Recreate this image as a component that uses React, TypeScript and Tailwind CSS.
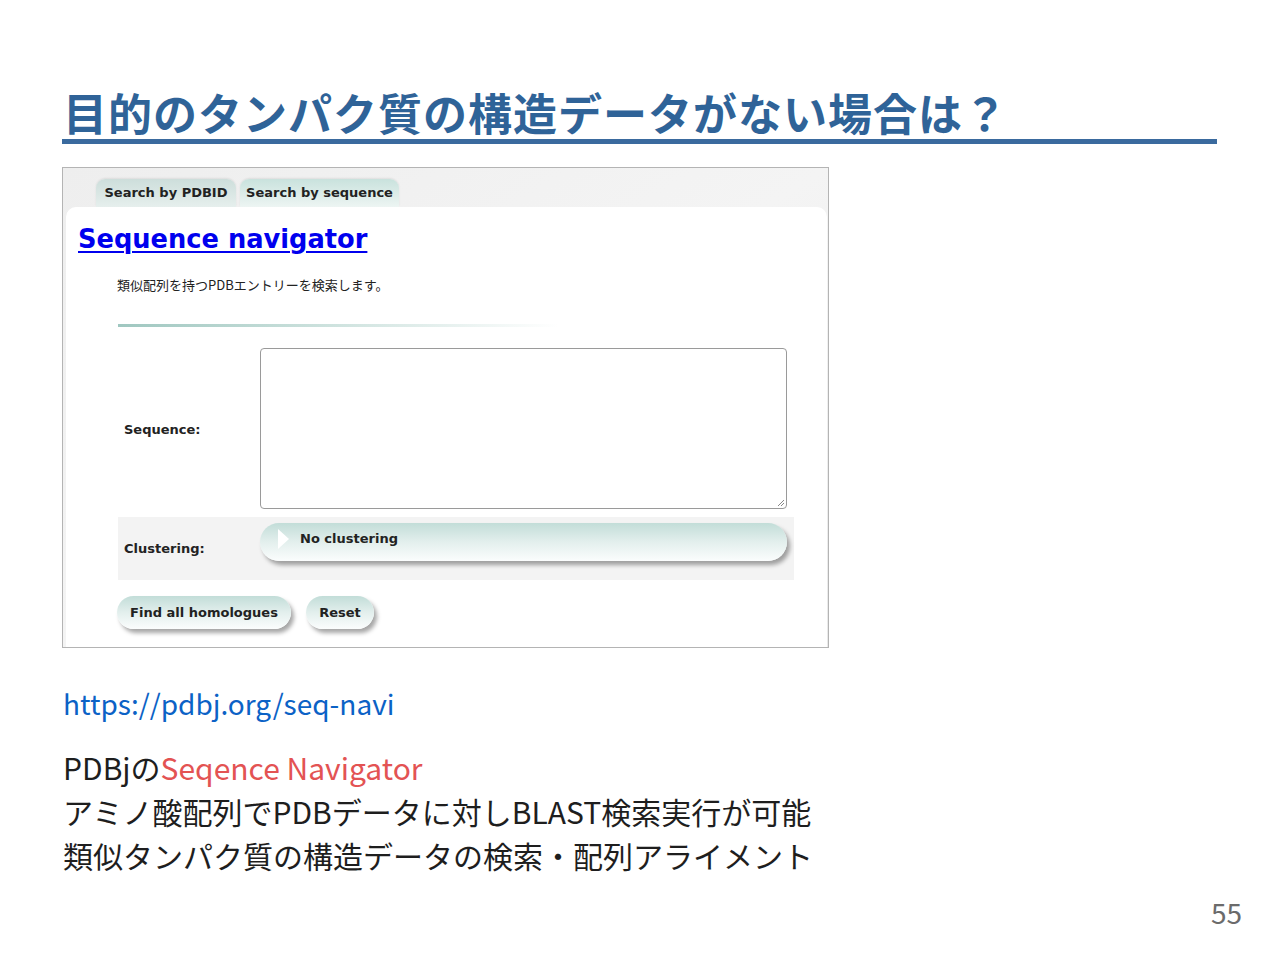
import React from "react";

const jp = { fontFamily: '"Noto Sans CJK JP", "Noto Sans", sans-serif' };
const vd = { fontFamily: '"DejaVu Sans", Verdana, sans-serif' };

function Pill({ children, className }: { children: React.ReactNode; className?: string }) {
  return (
    <div
      className={
        "flex items-center rounded-full bg-gradient-to-b from-[#c2ddd8] via-[#e3efed] to-[#fbfdfd] shadow-[3px_4px_4px_rgba(0,0,0,0.35)] " +
        (className || "")
      }
    >
      {children}
    </div>
  );
}

export default function App() {
  return (
    <div className="w-[1280px] h-[960px] bg-white relative overflow-hidden" style={jp}>
      <div className="pl-[62px] pt-[88px]">
        <h1 className="text-[44px] leading-[48px] font-bold text-[#2f6398] tracking-[1px] pl-[1px]">
          目的のタンパク質の構造データがない場合は？
        </h1>
        <div className="mt-[3px] h-[5px] w-[1155px] bg-[#3a6a9e]" />

        {/* screenshot */}
        <div className="mt-[23px] w-[767px] h-[481px] border border-[#b4b4b4] bg-gradient-to-br from-[#eeeeee] via-[#f4f4f4] to-[#e9e9e9] pt-[11px] flex flex-col" style={vd}>
          <div className="flex items-end pl-[33px] gap-[4px] h-[28px]">
            <div className="h-[28px] w-[140px] rounded-t-[9px] bg-gradient-to-b from-[#cddedb] to-[#e6efed] flex items-center justify-center text-[13px] font-bold text-[#222] shadow-[0_-1px_2px_rgba(0,0,0,0.08)]">
              Search by PDBID
            </div>
            <div className="h-[28px] w-[159px] rounded-t-[9px] bg-gradient-to-b from-[#c9e2dd] to-[#edf5f3] flex items-center justify-center text-[13px] font-bold text-[#222] shadow-[0_-1px_2px_rgba(0,0,0,0.08)]">
              Search by sequence
            </div>
          </div>
          <div className="ml-[3px] mr-[1px] flex-1 bg-white rounded-t-[10px] pt-[14px] flex flex-col">
            <div className="h-[36px] flex items-center pl-[12px]">
              <a className="text-[25.7px] font-bold text-[#0000ee] underline decoration-2 underline-offset-[3px]" href="#">
                Sequence navigator
              </a>
            </div>
            <div className="mt-[18px] h-[20px] flex items-center pl-[51px] text-[13px] text-[#222]" style={jp}>
              類似配列を持つPDBエントリーを検索します。
            </div>
            <div className="mt-[29px] ml-[52px] h-[3px] w-[440px] bg-gradient-to-r from-[#9fc7c0] via-[#cfe3df] to-white" />
            <div className="mt-[21px] ml-[52px] w-[676px] flex flex-col">
              <div className="flex h-[161px]">
                <div className="w-[142px] flex items-center pl-[6px] pt-[2px] text-[13px] font-bold text-[#222]">Sequence:</div>
                <div className="relative w-[527px] h-[161px] border border-[#9a9a9a] rounded-[4px] bg-white">
                  <svg className="absolute right-[1px] bottom-[1px]" width="9" height="9" viewBox="0 0 9 9">
                    <path d="M8 2 L2 8 M8 5 L5 8" stroke="#888" strokeWidth="1" />
                  </svg>
                </div>
              </div>
              <div className="mt-[8px] h-[63px] bg-[#f3f3f3] flex pt-[6px]">
                <div className="w-[142px] flex items-center pl-[6px] text-[13px] font-bold text-[#222] h-[52px]">Clustering:</div>
                <Pill className="w-[527px] h-[38px] items-start pt-[6px]">
                  <svg className="ml-[18px]" width="12" height="20" viewBox="0 0 12 20">
                    <path d="M0 0 L11 10 L0 20 Z" fill="#ffffff" />
                  </svg>
                  <span className="ml-[10px] text-[13px] font-bold text-[#222]">No clustering</span>
                </Pill>
              </div>
              <div className="mt-[16px] flex gap-[15px] h-[33px]">
                <Pill className="w-[174px] h-[33px] justify-center text-[13px] font-bold text-[#222] ml-[-1px]">
                  Find all homologues
                </Pill>
                <Pill className="w-[68px] h-[33px] justify-center text-[13px] font-bold text-[#222]">Reset</Pill>
              </div>
            </div>
          </div>
        </div>

        <div className="mt-[33px] text-[28px] leading-[44px] text-[#0b62c6] pl-[1px]">https://pdbj.org/seq-navi</div>
        <div className="mt-[20px] text-[30px] leading-[44px] text-[#1e1e1e] pl-[1px]">
          <div>
            PDBjの<span className="text-[#e35353]">Seqence Navigator</span>
          </div>
          <div>アミノ酸配列でPDBデータに対しBLAST検索実行が可能</div>
          <div>類似タンパク質の構造データの検索・配列アライメント</div>
        </div>
      </div>
      <div className="absolute right-[38px] top-[893px] text-[28px] leading-[38px] text-[#6b6b6b]">55</div>
    </div>
  );
}
